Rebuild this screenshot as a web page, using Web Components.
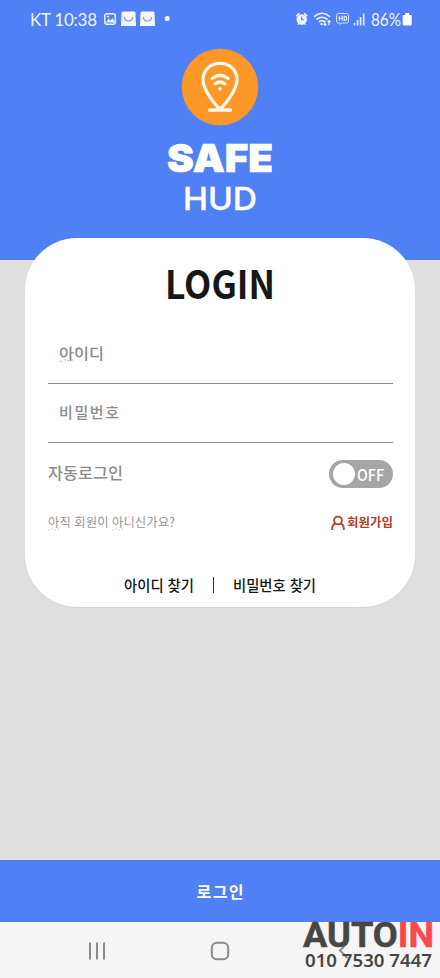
<!DOCTYPE html>
<html lang="ko">
<head>
<meta charset="utf-8">
<meta name="viewport" content="width=device-width">
<title>SAFE HUD</title>
<style>
html,body{margin:0;height:100%;background:#dfdfdf}
body{font-family:"Noto Sans CJK KR","Noto Sans",sans-serif}
</style>
</head>
<body>
<login-app></login-app>
<script>
const define=(name,html,ready)=>customElements.define(name,class extends HTMLElement{
  constructor(){super();this.attachShadow({mode:'open'}).innerHTML=html;}
  connectedCallback(){if(ready)ready(this,this.shadowRoot);}
});

/* A single line of text, stretched or tracked to the width given in "w". */
define('fit-label',`<style>:host{display:block;white-space:nowrap;line-height:1;flex:none}
span{display:inline-block;transform-origin:0 50%}</style><span><slot></slot></span>`,(el,root)=>{
  const w=parseFloat(el.getAttribute('w'));
  const span=root.querySelector('span');
  el.style.width=w+'px';
  const natural=span.getBoundingClientRect().width;
  if(!natural)return;
  if(el.hasAttribute('track')){
    const gap=(w-natural)/(el.textContent.length-1);
    span.style.letterSpacing=gap+'px';
  }else span.style.transform='scaleX('+w/natural+')';
});

define('status-bar',`<style>
:host{display:flex;height:38px;box-sizing:border-box;padding:0 28px 0 30px;align-items:center;color:#eef5ff;font:17px Lato,"Noto Sans",sans-serif}
svg{display:block;flex:none}.time{margin-right:7px}.gap{flex:1}
</style>
<fit-label class="time" w="67" track>KT 10:38</fit-label>
<svg width="67" height="16" viewBox="0 0 67 16">
<rect x=".8" y="2.8" width="10.5" height="10.5" rx="2" fill="none" stroke="#eef5ff" stroke-width="1.5"/>
<path d="M2 11.500l2.500-4 2 2L8.500 7l2.500 4.500z" fill="#eef5ff"/><circle cx="4" cy="5.500" r="1.100" fill="#eef5ff"/>
<g fill="#f4f9ff"><path d="M19 0.500h11a1.500 1.500 0 0 1 1.500 1.500l.5 13h-15l.5-13A1.500 1.500 0 0 1 19 .5zM38 .5h11a1.500 1.500 0 0 1 1.500 1.500l.5 13H36l.5-13A1.500 1.500 0 0 1 38 .5z"/></g>
<path d="M20.500 6q0 4 4 4t4-4M39.500 6q0 4 4 4t4-4" fill="none" stroke="#7c9bd8" stroke-width="1.200"/>
<circle cx="63.200" cy="7.600" r="2.500" fill="#fff"/>
</svg>
<div class="gap"></div>
<svg width="72" height="16" viewBox="0 0 72 16" style="margin-right:4px">
<g fill="#eef5ff"><circle cx="6.700" cy="8.500" r="5.200"/><path d="M.6 4.500L4 1.700l1 1.200L1.600 5.700zM12.800 4.500L9.400 1.700l-1 1.200 3.400 2.800zM2.300 13.500l1.500-2 1 .8-1.400 1.800zM11.100 13.500l-1.500-2-1 .8 1.400 1.800z"/></g>
<path d="M6.700 5.500v3.300h2.600" fill="none" stroke="#5b84de" stroke-width="1.100"/>
<g fill="none" stroke="#eef5ff" stroke-width="1.600" stroke-linecap="round"><path d="M19.500 5.300q7.500-6 15 0M22 8.100q5-3.700 10 0M24.500 10.700q2.500-1.800 4.500 0"/></g>
<path d="M25.500 12h2v2h-2z" fill="#eef5ff"/>
<path d="M30 9.500v4.800M28.500 12.800l1.500 1.500 1.500-1.500M34 14.200V9.500M32.500 11L34 9.500l1.500 1.500" fill="none" stroke="#eef5ff" stroke-width="1.200"/>
<path d="M43.500 2.500h8q2 0 2 2v5.500q0 2-2 2h-5l-1.500 1.500V12h-1.500q-2 0-2-2V4.500q0-2 2-2z" fill="none" stroke="#d3e2ff"/>
<path d="M44.200 4.800v5M47.200 4.800v5M44.200 7.300h3M49.200 5.200v4.200h.8q1.700 0 1.700-2.100t-1.700-2.100z" fill="none" stroke="#eef5ff" stroke-width="1.100"/>
<path d="M59.500 12v2.500M62.600 9v5.500M65.600 6v8.500M68.700 2.500v12" stroke="#dce9ff" stroke-width="1.700"/>
</svg>
<fit-label w="30">86%</fit-label>
<svg width="10" height="16" viewBox="0 0 10 16" style="margin-left:1px"><path d="M3.200 2h4v2h1.500q1 0 1 1v8.500q0 1-1 1h-7q-1 0-1-1V5q0-1 1-1h1.500z" fill="#fff"/></svg>`);

define('brand-logo',`<style>
:host{display:flex;flex-direction:column;align-items:center;color:#fff;padding-top:10px}
svg{display:block}
.safe{font:900 38.500px/40px Inter,sans-serif;margin-top:11.500px;-webkit-text-stroke:.7px #fff}
.hud{font:500 31.500px/40px Inter,sans-serif;margin-top:1.500px;-webkit-text-stroke:.4px #fff}
</style>
<svg width="78" height="78" viewBox="0 0 78 78"><circle cx="39" cy="39" r="38.300" fill="#fc9827"/>
<g fill="none" stroke="#fff8e8" stroke-width="3.300" stroke-linecap="round">
<path d="M39 61C35 58 22 42 22 32C22 22 29.500 15.300 39 15.300S56 22 56 32C56 42 43 58 39 61zM28.500 62h21"/>
<path d="M31 30.500q8-6.500 16 0M34 36q5-4 10 0"/></g><circle cx="39" cy="40.800" r="1.900" fill="#fff8e8"/></svg>
<fit-label class="safe" w="106">SAFE</fit-label>
<fit-label class="hud" w="74">HUD</fit-label>`);

define('line-field',`<style>:host{display:flex;position:relative;box-sizing:border-box;border-bottom:1.500px solid #8c8c8c;color:#8c8c8c;padding-left:11px;align-items:center;font-size:15px;font-weight:500}</style><slot></slot>`);

define('off-switch',`<style>:host{display:flex;align-items:center;justify-content:space-between;width:64px;height:28px;box-sizing:border-box;padding:0 9px 0 4px;border-radius:14px;background:#a6a6a6;color:#fff;font:500 16px "Noto Sans CJK KR",sans-serif}
i{width:22px;height:22px;border-radius:50%;background:#fff}</style><i></i><fit-label w="27">OFF</fit-label>`);

define('login-card',`<style>
:host{display:flex;flex-direction:column;box-sizing:border-box;width:390px;height:369px;margin:-22px auto 0 25px;padding:0 22px 0 23px;border-radius:52px;background:#fff;box-shadow:0 1px 1px #d2d4dc}
h1{margin:25px 0 0;height:41px;display:flex;justify-content:center;color:#171717;font-size:38.500px;font-weight:700}
h1 fit-label{margin-left:-1px}
.id{height:60px;margin-top:20px}.pw{height:58.500px}
.id fit-label,.pw fit-label{margin-top:-2px}
.row{display:flex;position:relative;justify-content:space-between;align-items:center}
.auto{margin-top:17px;height:28px;color:#8c8c8c;font-size:16px;font-weight:500}
.auto>fit-label{margin-top:-3px}
.join{margin-top:25px;height:20px;color:#969696;font-size:12.500px}
.sign{display:flex;align-items:center;gap:2px;color:#b3402a;font-weight:700}
.find{margin:42px 0 0;display:flex;justify-content:center;align-items:center;height:20px;font-size:15px;font-weight:500;color:#151515;gap:19px;padding-right:1px}
.bar{width:1.300px;height:16px;background:#333}
svg{display:block}.dots{position:absolute;left:0;top:0;fill:none;stroke:#999;stroke-linecap:round}
</style>
<h1><fit-label w="110">LOGIN</fit-label></h1>
<line-field class="id"><fit-label w="45">아이디</fit-label><svg class="dots" width="70" height="50" viewBox="0 0 70 50" stroke-width="1.500"><path d="M13 37.500h0M17 36h0M20 36.800h0M24 36h0M28 25h0M32 25h0"/></svg></line-field>
<line-field class="pw"><fit-label w="60" track>비밀번호</fit-label></line-field>
<div class="row auto"><fit-label w="75">자동로그인</fit-label><off-switch></off-switch></div>
<div class="row join"><fit-label w="127">아직 회원이 아니신가요?</fit-label><svg class="dots" width="130" height="20" viewBox="0 0 130 20" stroke-width="1"><path d="M1 17h0M4 16h0M7 16.500h0M10 16h0M51 4.500h0M54 4h0M65 17h0M68 16h0M71 16.500h0M74 16h0M78 4.500h0M81 4h0"/></svg>
<span class="sign"><svg width="14" height="16" viewBox="0 0 14 16"><g fill="none" stroke="#b3402a" stroke-width="1.800"><circle cx="7" cy="5.500" r="3.900"/><path d="M1.200 15v-1.500q0-4.200 3.600-5M12.800 15v-1.500q0-4.200-3.600-5"/></g></svg><fit-label w="46">회원가입</fit-label></span></div>
<div class="find"><fit-label w="70">아이디 찾기</fit-label><span class="bar"></span><fit-label w="83">비밀번호 찾기</fit-label></div>`);

define('system-nav',`<style>:host{display:grid;grid-template-columns:194px 52px 1fr;height:56px;background:#f5f5f5;align-items:center}
svg{display:block;margin-top:2px}.recent{justify-self:center}.home{justify-self:center}.back{margin-left:92px}</style>
<svg class="recent" width="20" height="20" viewBox="0 0 20 20"><path d="M3 1.500v17M10 1.500v17M17 1.500v17" stroke="#8c8c8c" stroke-width="2"/></svg>
<svg class="home" width="20" height="20" viewBox="0 0 20 20"><rect x="1.800" y="1.800" width="16.400" height="16.400" rx="5" fill="none" stroke="#8c8c8c" stroke-width="2"/></svg>
<svg class="back" width="12" height="20" viewBox="0 0 12 20"><path d="M9.500 2L2 9.500l7.500 7.500" fill="none" stroke="#8c8c8c" stroke-width="2"/></svg>`);

/* Seller's mark laid over the system bar. */
define('seller-mark',`<style>:host{position:absolute;right:6px;bottom:9px;display:flex;flex-direction:column;color:#464744;font-family:"Noto Sans",sans-serif}
.name{font:700 35px/25px Roboto,sans-serif;height:25px;margin:0 0 4px -2px;-webkit-text-stroke:.5px #464744}
.name span{color:#fb4848;-webkit-text-stroke:.5px #fb4848}
.tel{font-size:18px;font-weight:600;line-height:17px;height:17px}</style>
<fit-label class="name" w="131">AUTO<span>IN</span></fit-label><fit-label class="tel" w="127">010 7530 7447</fit-label>`);

define('login-app',`<style>
:host{position:relative;display:flex;flex-direction:column;width:440px;height:978px;overflow:hidden;background:#dfdfdf}
header{height:260px;background:#4f80f6}
.space{flex:1}
.submit{display:flex;justify-content:center;align-items:center;height:62.500px;background:#4f80f6;color:#fff;font-size:16px;font-weight:700}
</style>
<header><status-bar></status-bar><brand-logo></brand-logo></header>
<login-card></login-card><div class="space"></div>
<div class="submit"><fit-label w="47" track>로그인</fit-label></div>
<system-nav></system-nav><seller-mark></seller-mark>`);

</script>
</body>
</html>
